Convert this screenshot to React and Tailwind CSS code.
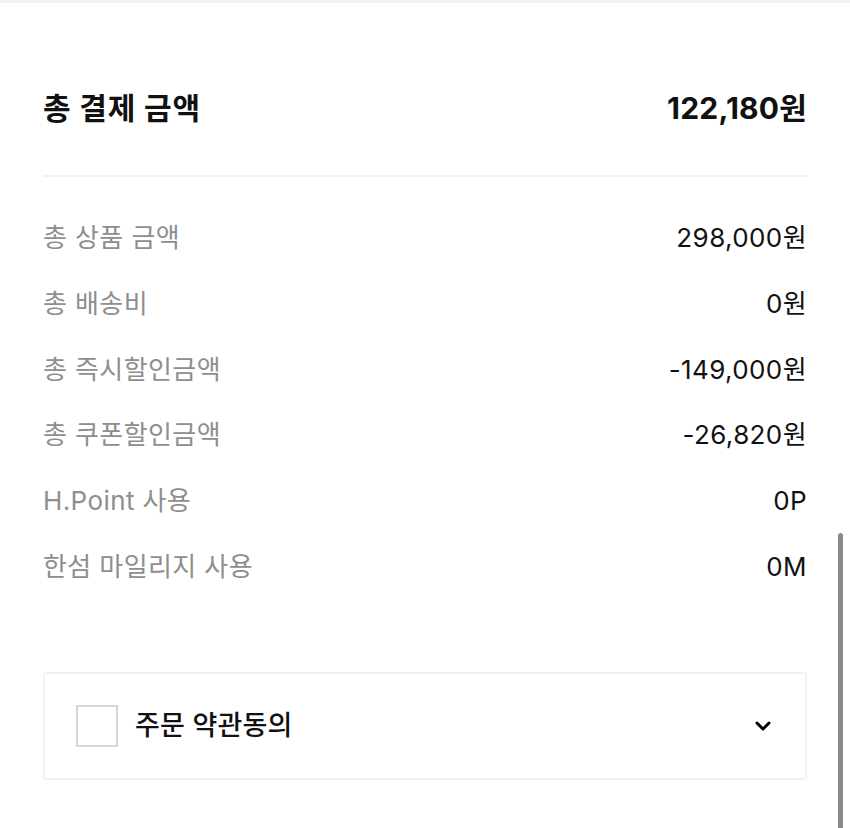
import { ChevronDown } from "lucide-react";

const rows = [
  { label: "총 상품 금액", value: "298,000원" },
  { label: "총 배송비", value: "0원" },
  { label: "총 즉시할인금액", value: "-149,000원" },
  { label: "총 쿠폰할인금액", value: "-26,820원" },
  { label: "H.Point 사용", value: "0P" },
  { label: "한섬 마일리지 사용", value: "0M" },
];

export default function App() {
  return (
    <div className="relative h-[828px] overflow-hidden bg-white font-['Inter','Noto_Sans_CJK_KR',sans-serif]">
      <div className="h-[3px] bg-[#f2f2f2]" />

      <div className="px-[43px]">
        <section className="flex items-center justify-between border-b-2 border-[#f1f1f1] pt-[83px] pb-[45px]">
          <h2 className="text-[30px] font-bold leading-[44px] tracking-[0.8px] text-[#111]">총 결제 금액</h2>
          <p className="text-[30px] font-bold leading-[44px] tracking-[0.2px] text-[#111]">122,180원</p>
        </section>

        <section className="flex flex-col gap-[30.8px] pt-[43px]">
          {rows.map((row) => (
            <div key={row.label} className="flex items-center justify-between leading-[35px]">
              <span className="text-[26px] tracking-[0.4px] text-[#8e8e8e]">{row.label}</span>
              <span className="text-[26px] tracking-[0.4px] text-[#111]">{row.value}</span>
            </div>
          ))}
        </section>

        <section className="mt-[88px] flex h-[108px] items-center justify-between rounded-[3px] border-2 border-[#f2f2f2] pl-[31px] pr-[30px]">
          <label className="flex items-center gap-[17px]">
            <span className="block h-[42px] w-[42px] border-2 border-[#d6d6d6] bg-white" />
            <span className="text-[27px] font-medium tracking-[0.2px] text-[#111]">주문 약관동의</span>
          </label>
          <ChevronDown className="h-[24px] w-[24px] text-black" strokeWidth={3} />
        </section>
      </div>

      <div className="absolute right-[7px] top-[533px] h-[300px] w-[5px] rounded-full bg-[#8a8a8a]" />
    </div>
  );
}
